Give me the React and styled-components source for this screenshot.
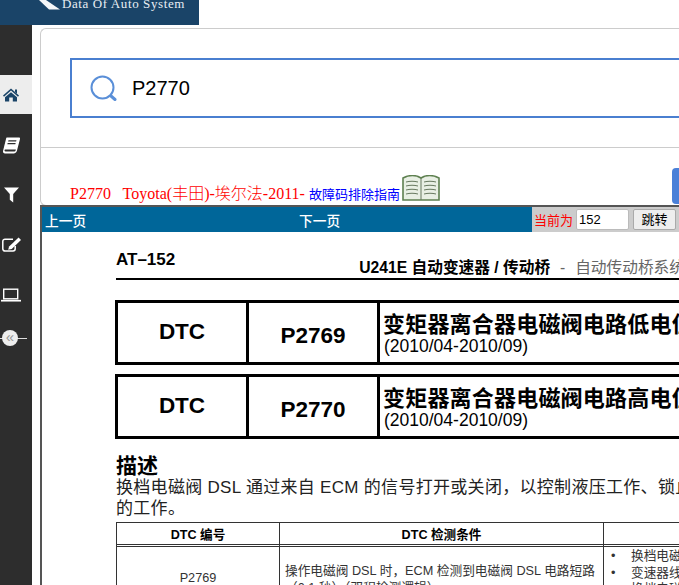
import React from 'react';
import styled, { createGlobalStyle } from 'styled-components';

const Global = createGlobalStyle`
  html, body { margin: 0; padding: 0; background: #fff; width: 679px; height: 585px; overflow: hidden; }
  #root { width: 679px; height: 585px; overflow: hidden; }
  * { box-sizing: border-box; }
`;
const cjk = `"Liberation Sans", "Noto Sans CJK SC", sans-serif`;
const Page = styled.div`display: flex; flex-direction: column; width: 679px; height: 585px; overflow: hidden; background: #fff;`;
const Header = styled.header`
  width: 199px; height: 25px; flex: none; background: #1a4468; display: flex; align-items: flex-start; padding-left: 39px; overflow: hidden;
`;
const HeaderText = styled.span`
  font: 13px/1 "Liberation Serif", serif; letter-spacing: 0.6px; color: #e8eef3; margin: -3px 0 0 1px; white-space: nowrap;
`;
const Body = styled.div`flex: 1; display: flex; min-height: 0;`;
const Side = styled.nav`width: 32px; flex: none; background: #2d2d2d; display: flex; flex-direction: column; padding-top: 50px;`;
const SideItem = styled.div`
  height: 39px; flex: none; display: flex; align-items: center;
  background: ${p => (p.$active ? '#ededed' : 'transparent')};
  margin-bottom: ${p => p.$gap || 11}px;
`;
const IconSvg = styled.svg`width: 22px; height: 20px; flex: none; display: block;`;
const Collapse = styled.div`position: relative; height: 20px; display: flex; align-items: center; padding-left: 2px;`;
const CollapseLine = styled.div`position: absolute; left: 0; top: 10px; width: 27px; height: 1px; background: #ddd;`;
const CollapseKnob = styled.div`
  position: relative; width: 16px; height: 16px; border-radius: 50%; background: #eee; color: #999;
  font: 15px/14px "Liberation Sans", sans-serif; text-align: center;
`;
const Main = styled.main`flex: 1; min-width: 0; display: flex; flex-direction: column; padding: 3px 0 0 8px;`;
const Panel = styled.section`
  height: 178px; flex: none; border: 1px solid #ccc; border-right: 0; border-radius: 6px 0 0 6px; width: 660px; display: flex; flex-direction: column;
`;
const SearchArea = styled.div`height: 119px; flex: none; border-bottom: 1px solid #ccc; padding: 29px 0 0 29px;`;
const SearchBox = styled.div`
  width: 640px; height: 60px; border: 2px solid #4a7fd0; display: flex; align-items: center; padding-left: 18px; gap: 15px;
`;
const SearchValue = styled.span`font: 20px "Liberation Sans", sans-serif; color: #000;`;
const TitleRow = styled.div`position: relative; flex: 1; display: flex; align-items: flex-end; padding: 0 0 0 29px;`;
const TitleRed = styled.span`font: 300 16px/18px "Liberation Serif", "Noto Sans CJK SC", serif; color: #f00; white-space: pre; margin-bottom: 2px;`;
const TitleBlue = styled.span`font: 13px/18px "Liberation Serif", "Noto Sans CJK SC", serif; color: #00f; white-space: pre; margin-bottom: 1px; margin-left: 4px;`;
const BookIcon = styled.svg`width: 38px; height: 26px; margin: 0 0 4px 2px; flex: none;`;
const BlueButton = styled.div`position: absolute; left: 631px; top: 20px; width: 20px; height: 36px; background: #4a80d8; border-radius: 4px 0 0 4px;`;
const Viewer = styled.section`
  width: 639px; flex: 1; min-height: 0; border: 2px solid #555; border-bottom: 0; border-right: 0; margin-top: -1px; display: flex; flex-direction: column; overflow: hidden;
`;
const Toolbar = styled.div`height: 25px; flex: none; background: #006699; display: flex; align-items: center; position: relative; color: #fff;`;
const NavText = styled.span`font: 500 13.7px "Noto Sans CJK SC", sans-serif; margin-left: ${p => p.$ml}px; white-space: nowrap;`;
const JumpBox = styled.div`
  position: absolute; left: 490px; top: 0; height: 25px; width: 150px; background: #ccc; display: flex; align-items: center; padding-left: 2px;
`;
const JumpLabel = styled.span`font: 13px "Noto Sans CJK SC", sans-serif; color: #f00; white-space: nowrap;`;
const JumpInput = styled.div`
  width: 53px; height: 21px; margin-left: 3px; background: #fff; border: 1px solid #bbb; border-radius: 2px; color: #000; font: 13px/19px "Liberation Sans", sans-serif; padding-left: 2px;
`;
const JumpBtn = styled.div`
  width: 43px; height: 21px; margin-left: 4px; background: #eee; border: 1px solid #aaa; border-radius: 2px; color: #000; font: 13px/18px "Noto Sans CJK SC", sans-serif; text-align: center;
`;
const Sheet = styled.article`flex: 1; min-height: 0; background: #fff; padding: 16px 0 0 73px; width: 720px; color: #000; font-family: ${cjk};`;
const SheetHead = styled.div`display: flex; align-items: flex-end; height: 32px; border-bottom: 2px solid #000; width: 600px; margin-left: 1px; padding-bottom: 1px;`;
const PageNo = styled.span`font: bold 17px ${cjk}; position: relative; top: -7px;`;
const Chapter = styled.span`font: bold 15.7px/18px ${cjk}; white-space: nowrap; margin-left: auto; margin-right: 31px;`;
const ChapterSub = styled.span`font-weight: normal; color: #666; white-space: pre; word-spacing: 0.6px;`;
const DtcBox = styled.div`
  display: grid; grid-template-columns: 131px 131px 1fr; height: 65px; width: 600px; border: 3px solid #000; border-right: 0; margin-top: ${p => p.$mt}px;
`;
const DtcCell = styled.div`
  border-right: 3px solid #000; display: flex; align-items: center; justify-content: center; font: bold 22.5px ${cjk};
  padding-bottom: ${p => (p.$up ? 2 : 0)}px; padding-top: ${p => (p.$down ? 6 : 0)}px;
`;
const DtcTitleCell = styled.div`padding: 8px 0 0 3px; overflow: hidden; white-space: nowrap;`;
const DtcTitle = styled.div`font: bold 22px/27px ${cjk}; letter-spacing: 0.2px;`;
const DtcDate = styled.div`font: 17.5px/17px ${cjk}; padding-left: 1px;`;
const H2 = styled.h2`font: bold 21px/23px ${cjk}; margin: 15px 0 0 1px;`;
const Para = styled.p`font: 17px/21px ${cjk}; color: #222; margin: 0 0 0 1px; white-space: nowrap; letter-spacing: 0.3px;`;
const Table = styled.div`
  display: grid; grid-template-columns: 163px 324px 200px; width: 640px; border: 1px solid #333; border-right: 0; margin-top: 3px; margin-left: 1px; 
`;
const Th = styled.div`height: 24px; border-right: 1px solid #333; border-bottom: 3px double #333; font: bold 12.6px/24px ${cjk}; text-align: center;`;
const Td = styled.div`font: 12.7px/16.5px ${cjk}; color: #333; border-right: 1px solid #333; height: 60px; padding: ${p => p.$pad || '16px 5px'}; text-align: ${p => (p.$center ? 'center' : 'left')}; overflow: hidden; white-space: nowrap;`;
const Bullet = styled.div`white-space: nowrap; padding-left: 20px; position: relative; &::before { content: '•'; position: absolute; left: 0; }`;

export default function App() {
  return (
    <Page>
      <Global />
      <Header>
        <svg width="22" height="10" viewBox="0 0 22 10"><path d="M0 0h7l14 9.5H10z" fill="#f4f6f8" /></svg>
        <HeaderText>Data Of Auto System</HeaderText>
      </Header>
      <Body>
        <Side>
          <SideItem $active>
            <IconSvg viewBox="0 0 22 20" fill="#1a4468">
              <path d="M11 3.5l8 7-1 1.2-7-6.1-7 6.1-1-1.2z" />
              <path d="M15 4.5h2v4.2l-2-1.8z" />
              <path d="M11 7.2l6 5.1v4.2h-4.2v-4h-3.6v4H5v-4.2z" />
            </IconSvg>
          </SideItem>
          <SideItem>
            <IconSvg viewBox="0 0 22 20" fill="#fff">
              <path fillRule="evenodd" d="M7 2.5h12c.8 0 1.2.7 1 1.400l-3 11.500c-.3 1.500-1.400 2.600-3 3.100H5c-1.400 0-2.200-1-2-2.400l3-12c.1-1 .4-1.600 1-1.600zM8.500 5.200l-.4 1.300h8l.4-1.300zM7.700 8l-.4 1.300h8l.4-1.300zM5.500 14.500c-.7 0-1.100.5-1 1 .1.600.5 1 1.100 1h8.800c.6 0 1-.4 1.200-1l.3-1z" />
            </IconSvg>
          </SideItem>
          <SideItem>
            <IconSvg viewBox="0 0 22 20" fill="#fff">
              <path d="M4 2.500h15l-5.800 6.500v8.500l-3.400-2.800V9z" />
            </IconSvg>
          </SideItem>
          <SideItem>
            <IconSvg viewBox="0 0 22 20">
              <path d="M13 4.200H5a2.200 2.200 0 0 0-2.200 2.200v7.400A2.200 2.200 0 0 0 5 16h8a2.200 2.200 0 0 0 2.200-2.200V11" fill="none" stroke="#fff" strokeWidth="1.500" />
              <path d="M18.600 2.500l2.400 2.400-9.300 9.100-3.500.8.900-3.400z" fill="#fff" />
            </IconSvg>
          </SideItem>
          <SideItem $gap={14}>
            <IconSvg viewBox="0 0 22 20" fill="none" stroke="#fff">
              <rect x="3.700" y="4.200" width="14" height="9.600" strokeWidth="1.400" />
              <path d="M1 15.700h20" strokeWidth="1.700" />
            </IconSvg>
          </SideItem>
          <Collapse><CollapseLine /><CollapseKnob>«</CollapseKnob></Collapse>
        </Side>
        <Main>
          <Panel>
            <SearchArea>
              <SearchBox>
                <svg width="27" height="27" viewBox="0 0 27 27" fill="none" stroke="#5a8fd8" strokeWidth="2"><circle cx="12.500" cy="12.500" r="11" /><path d="M21 21l4 3.500" strokeWidth="3" strokeLinecap="round" /></svg>
                <SearchValue>P2770</SearchValue>
              </SearchBox>
            </SearchArea>
            <TitleRow>
              <TitleRed>{'P2770   Toyota(丰田)-埃尔法-2011-'}</TitleRed>
              <TitleBlue>故障码排除指南</TitleBlue>
              <BookIcon viewBox="0 0 38 26" fill="none">
                <path d="M1 3c6-3 13-3 18 0c5-3 12-3 18 0v22H1z" fill="#e8efe4" stroke="#5e8050" strokeWidth="1.600" />
                <path d="M19 3v22M4 7c4-1 8-1 12 0M4 11c4-1 8-1 12 0M4 15c4-1 8-1 12 0M4 19c4-1 8-1 12 0M22 7c4-1 8-1 12 0M22 11c4-1 8-1 12 0M22 15c4-1 8-1 12 0M22 19c4-1 8-1 12 0" stroke="#67795f" strokeWidth="1" />
              </BookIcon>
              <BlueButton />
            </TitleRow>
          </Panel>
          <Viewer>
            <Toolbar>
              <NavText $ml={3}>上一页</NavText>
              <NavText $ml={213}>下一页</NavText>
              <JumpBox>
                <JumpLabel>当前为</JumpLabel>
                <JumpInput>152</JumpInput>
                <JumpBtn>跳转</JumpBtn>
              </JumpBox>
            </Toolbar>
            <Sheet>
              <SheetHead>
                <PageNo>AT–152</PageNo>
                <Chapter>U241E 自动变速器 / 传动桥<ChapterSub>{'  -  自动传动桥系统'}</ChapterSub></Chapter>
              </SheetHead>
              <DtcBox $mt={20}>
                <DtcCell $up>DTC</DtcCell>
                <DtcCell $down>P2769</DtcCell>
                <DtcTitleCell>
                  <DtcTitle>变矩器离合器电磁阀电路低电位</DtcTitle>
                  <DtcDate>(2010/04-2010/09)</DtcDate>
                </DtcTitleCell>
              </DtcBox>
              <DtcBox $mt={9}>
                <DtcCell $up>DTC</DtcCell>
                <DtcCell $down>P2770</DtcCell>
                <DtcTitleCell>
                  <DtcTitle>变矩器离合器电磁阀电路高电位</DtcTitle>
                  <DtcDate>(2010/04-2010/09)</DtcDate>
                </DtcTitleCell>
              </DtcBox>
              <H2>描述</H2>
              <Para>换档电磁阀 DSL 通过来自 ECM 的信号打开或关闭，以控制液压工作、锁止</Para>
              <Para>的工作。</Para>
              <Table>
                <Th>DTC 编号</Th>
                <Th>DTC 检测条件</Th>
                <Th />
                <Td $center $pad="23px 0 0">P2769</Td>
                <Td>操作电磁阀 DSL 时，ECM 检测到电磁阀 DSL 电路短路<br />（0.1 秒）（双程检测逻辑）</Td>
                <Td $pad="1px 7px">
                  <Bullet>换档电磁阀</Bullet>
                  <Bullet>变速器线束</Bullet>
                  <Bullet>换档电磁阀</Bullet>
                </Td>
              </Table>
            </Sheet>
          </Viewer>
        </Main>
      </Body>
    </Page>
  );
}
